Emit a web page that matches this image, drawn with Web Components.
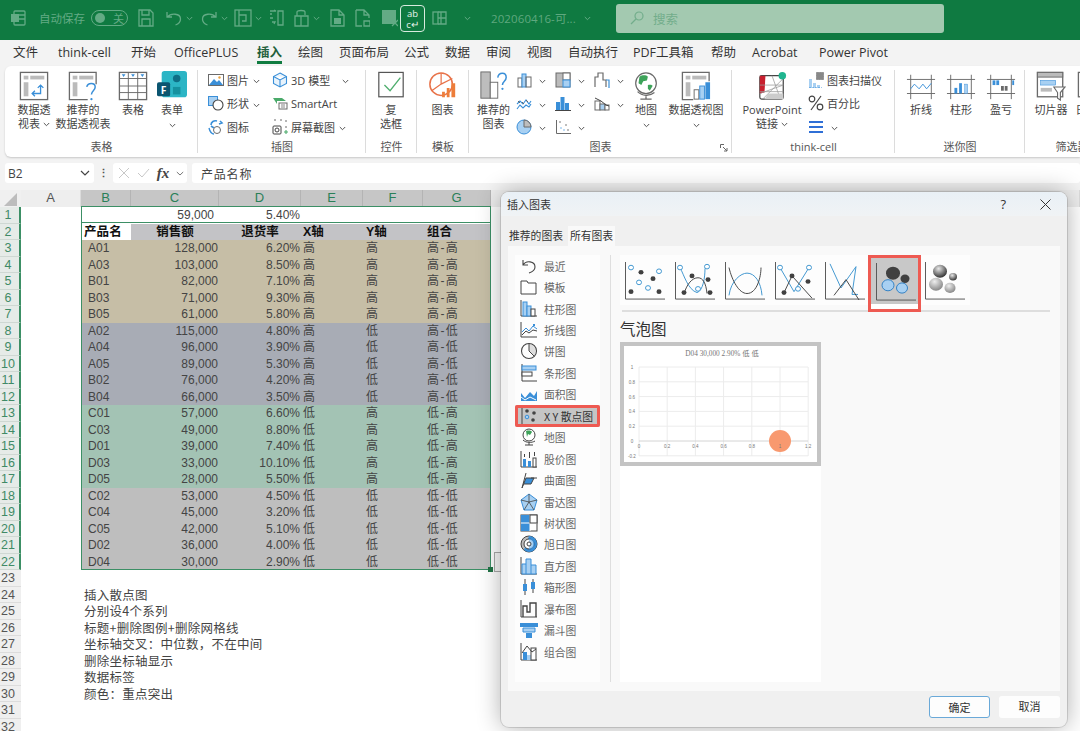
<!DOCTYPE html>
<html lang="zh">
<head>
<meta charset="utf-8">
<style>
html,body{margin:0;padding:0;width:1080px;height:731px;overflow:hidden;background:#f3f3f3}
body{font-family:"Open Sans","Noto Sans CJK SC",sans-serif;position:relative;display:flex;flex-direction:column}
</style>
</head>
<body>
<xl-titlebar></xl-titlebar>
<xl-tabs></xl-tabs>
<xl-ribbon>
  <xl-group label="表格" w="193" pad="5">
    <xl-big icon="pivot" w="48" chev="inline">数据透<br>视表</xl-big>
    <xl-big icon="recpivot" w="50">推荐的<br>数据透视表</xl-big>
    <xl-big icon="table" w="50">表格</xl-big>
    <xl-big icon="forms" w="28" chev="below">表单</xl-big>
  </xl-group>
  <xl-group label="插图" w="168" pad="10">
    <xl-col w="64">
      <xl-small icon="picture" chev="1">图片</xl-small>
      <xl-small icon="shape" chev="1">形状</xl-small>
      <xl-small icon="iconset">图标</xl-small>
    </xl-col>
    <xl-col w="88">
      <xl-small icon="cube" chev="far">3D 模型</xl-small>
      <xl-small icon="smartart">SmartArt</xl-small>
      <xl-small icon="screenshot" chev="1">屏幕截图</xl-small>
    </xl-col>
  </xl-group>
  <xl-group label="控件" w="51" pad="0">
    <xl-big icon="checkbox" w="50">复<br>选框</xl-big>
  </xl-group>
  <xl-group label="模板" w="52" pad="0">
    <xl-big icon="template" w="51">图表</xl-big>
  </xl-group>
  <xl-group label="图表" w="263" pad="2" launcher="1">
    <xl-big icon="recchart" w="45">推荐的<br>图表</xl-big>
    <xl-col w="39"><xl-small icon="bar" chev="1"></xl-small><xl-small icon="line" chev="1"></xl-small><xl-small icon="pie" chev="1"></xl-small></xl-col>
    <xl-col w="39"><xl-small icon="tree" chev="1"></xl-small><xl-small icon="stat" chev="1"></xl-small><xl-small icon="scatter" chev="1"></xl-small></xl-col>
    <xl-col w="34"><xl-small icon="waterfall" chev="1"></xl-small><xl-small icon="combo" chev="1"></xl-small></xl-col>
    <xl-big icon="globe" w="36" chev="below">地图</xl-big>
    <xl-big icon="pivotchart" w="64" chev="below">数据透视图</xl-big>
  </xl-group>
  <xl-group label="think-cell" w="163" pad="9">
    <xl-big icon="ppt" w="62" chev="inline">PowerPoint<br>链接</xl-big>
    <xl-col w="84" style="margin-left:5px">
      <xl-small icon="scan">图表扫描仪</xl-small>
      <xl-small icon="percent">百分比</xl-small>
      <xl-small icon="lines" chev="1"></xl-small>
    </xl-col>
  </xl-group>
  <xl-group label="迷你图" w="130" pad="6">
    <xl-big icon="sline" w="40">折线</xl-big>
    <xl-big icon="sbar" w="40">柱形</xl-big>
    <xl-big icon="swin" w="40">盈亏</xl-big>
  </xl-group>
  <xl-group label="筛选器" w="94" pad="8" nodiv="1">
    <xl-big icon="slicer" w="36">切片器</xl-big>
    <xl-big icon="timeline" w="36" style="margin-left:5px">日程表</xl-big>
  </xl-group>
</xl-ribbon>
<xl-formula-bar></xl-formula-bar>
<xl-sheet></xl-sheet>
<xl-chart-dialog></xl-chart-dialog>

<script>
const G='#6a6a6a',D='#444',B='#3a8fd8',L='#a8d0f2';
const big={
 pivot:`<rect x="1.5" y="1.5" width="29" height="29" fill="#fff" stroke="${G}" stroke-width="1.4"/><rect x="5" y="5" width="5" height="4" fill="#bbb"/><rect x="12" y="5" width="15" height="4" fill="#bbb"/><rect x="5" y="12" width="5" height="15" fill="#bbb"/><path d="M14 24h9v-9M20 18l3-3 3 3M17 21l-3 3 3 3" fill="none" stroke="${B}" stroke-width="1.4"/>`,
 recpivot:`<path d="M30 14V1.5H1.5v29H21" fill="#fff" stroke="${G}" stroke-width="1.4"/><rect x="5" y="5" width="5" height="4" fill="#bbb"/><rect x="12" y="5" width="15" height="4" fill="#bbb"/><rect x="5" y="12" width="5" height="15" fill="#bbb"/><path d="M20 17c1-5 9-5 9 0 0 4-4 4-4 8" fill="none" stroke="${B}" stroke-width="1.6"/><circle cx="25" cy="30" r="1.2" fill="${B}"/>`,
 table:`<rect x="1.5" y="1.5" width="29" height="29" fill="#fff" stroke="${G}" stroke-width="1.4"/><path d="M1.5 8h29M1.5 16h29M1.5 23h29M11 1.5v29M21 1.5v29" stroke="${G}" fill="none"/><path d="M4 3.5h4l-2 3zM14 3.5h4l-2 3zM24 3.5h4l-2 3z" fill="${B}"/>`,
 forms:`<rect x="5" y="0" width="27" height="28" rx="3" fill="#2cb5c5"/><circle cx="21" cy="8" r="4" fill="#0f6f86"/><rect x="17" y="17" width="8" height="8" fill="#15919f"/><rect x="0" y="12" width="14" height="15" rx="2" fill="#0b5570"/><text x="7" y="24" font-size="11" font-weight="700" fill="#fff" text-anchor="middle" font-family="Open Sans">F</text>`,
 checkbox:`<rect x="3" y="1.5" width="26" height="26" fill="#fff" stroke="#555" stroke-width="1.3"/><path d="M9 15l6 6 11-14" fill="none" stroke="#4fae6e" stroke-width="1.4"/>`,
 template:`<circle cx="14" cy="14" r="12" fill="#fff" stroke="#e8734a" stroke-width="1.6"/><path d="M14 2v12M4 21l10-7L26 8" stroke="#e8734a" stroke-width="1.3" fill="none"/><path d="M15 28V22h3v6zM20 28V18h3v10zM25 28V13h4v15z" fill="#ed7d3a"/>`,
 recchart:`<rect x="2" y="1" width="10" height="28" fill="#bdbdbd" stroke="${G}"/><rect x="12" y="12" width="8" height="17" fill="#fff" stroke="${G}"/><path d="M20 7c1-6 9-6 9 0 0 4-4 4-4 8" fill="none" stroke="${B}" stroke-width="1.6"/><circle cx="25" cy="19" r="1.2" fill="${B}"/>`,
 globe:`<circle cx="16" cy="13" r="11" fill="#fff" stroke="${G}" stroke-width="1.3"/><path d="M9 6c3-2 7-2 9 0l-1 4-4 1-2 4-3-2zM18 15c3-1 5 0 5 1l-3 5-2-2z" fill="#3ea35a"/><path d="M7 22c5 5 13 5 18 1M16 27v3M10 30h12" fill="none" stroke="${G}" stroke-width="1.4"/>`,
 pivotchart:`<path d="M30 11V1.5H1.5v29H13" fill="#fff" stroke="${G}" stroke-width="1.4"/><rect x="5" y="5" width="5" height="4" fill="#bbb"/><rect x="12" y="5" width="15" height="4" fill="#bbb"/><rect x="5" y="12" width="5" height="15" fill="#bbb"/><rect x="14" y="20" width="5" height="10" fill="#fff" stroke="${G}"/><rect x="20" y="16" width="5" height="14" fill="${L}" stroke="${B}"/><rect x="26" y="12" width="5" height="18" fill="${B}"/>`,
 ppt:`<rect x="3" y="5" width="25" height="25" rx="2" fill="#fff" stroke="#444" stroke-width="1.3"/><path d="M3 5h6l-1 18-5 1z" fill="#c8202f"/><path d="M3 24l25-9M6 30l22-22M16 5l9 25M3 15h25M3 22h25" stroke="#999" fill="none" stroke-width=".8"/><path d="M8 30l4-6h16v6z" fill="#ccc"/><circle cx="27" cy="5" r="4" fill="#1fb58f"/>`,
 sline:`<path d="M1 9h30M1 24h30M5 4v26M27 4v26" stroke="${G}" fill="none"/><path d="M5 19l4-5 5 5 4-5 4 5 5-6" stroke="${B}" fill="none"/>`,
 sbar:`<path d="M1 9h30M1 24h30M5 4v26M27 4v26" stroke="${G}" fill="none"/><rect x="9" y="18" width="3" height="6" fill="${B}"/><rect x="14" y="13" width="3" height="11" fill="${B}"/><rect x="20" y="14" width="3" height="10" fill="${L}" stroke="${B}" stroke-width=".5"/>`,
 swin:`<path d="M1 9h30M1 24h30M5 4v26M27 4v26" stroke="${G}" fill="none"/><rect x="7" y="10" width="3" height="5" fill="${B}"/><rect x="11" y="10" width="3" height="5" fill="${B}"/><rect x="16" y="16" width="3" height="5" fill="${G}"/><rect x="20" y="16" width="3" height="5" fill="${G}"/><rect x="28" y="10" width="2" height="5" fill="${B}"/>`,
 slicer:`<rect x="1.5" y="1.5" width="27" height="26" fill="#fff" stroke="${G}" stroke-width="1.4"/><rect x="1.5" y="1.5" width="27" height="5" fill="#bbb" stroke="${G}"/><rect x="5" y="10" width="16" height="5" fill="${L}" stroke="${B}" stroke-width=".6"/><rect x="5" y="18" width="12" height="4" fill="#bbb"/><path d="M19 17h12l-5 6v8l-3-2v-6z" fill="#fff" stroke="${G}" stroke-width="1.2"/>`,
 timeline:`<rect x="1.5" y="1.5" width="27" height="26" fill="#fff" stroke="${G}" stroke-width="1.4"/>`
};
const small={
 picture:`<rect x=".5" y="2.5" width="15" height="11" fill="#fff" stroke="${G}"/><path d="M1 13l5-6 3 3 2-2 4 5z" fill="${B}"/><circle cx="11.5" cy="5.5" r="1.2" fill="#e9a33f"/>`,
 shape:`<rect x=".5" y="1.5" width="9" height="9" fill="${L}" stroke="${B}"/><circle cx="10" cy="10" r="5" fill="#fff" stroke="${D}" stroke-width="1.1"/>`,
 iconset:`<path d="M3 6c0-3 3-5 6-4M12 2l2 2-3 1M3 7l3 2" fill="none" stroke="${B}" stroke-width="1.6"/><circle cx="9" cy="11" r="3.5" fill="#fff" stroke="${G}"/><path d="M1 9c1 4 2 6 5 6" fill="none" stroke="${B}" stroke-width="1.4"/>`,
 cube:`<path d="M8 1l6.5 3.5v7L8 15l-6.5-3.5v-7zM1.5 4.5L8 8l6.5-3.5M8 8v7" fill="#e8f3fc" stroke="${B}" stroke-width="1.1"/>`,
 smartart:`<path d="M1 3h9l4 3H5v3z" fill="#4aaa6a"/><rect x="7" y="8" width="8" height="6" fill="#fff" stroke="${G}"/><path d="M9 10h4M9 12h4" stroke="${G}" stroke-width=".8"/>`,
 screenshot:`<path d="M2 1h3M8 1h3M14 1v3M14 7v2" stroke="${G}" stroke-dasharray="2 1" fill="none"/><rect x="1" y="7" width="8" height="8" rx="1" fill="#fff" stroke="${D}"/><circle cx="5" cy="11" r="2" fill="none" stroke="${D}"/><path d="M12 13h4M14 11v4" stroke="#4aaa6a" stroke-width="1.1"/>`,
 bar:`<rect x="2" y="6" width="4" height="9" fill="none" stroke="${G}"/><rect x="6" y="2" width="4" height="13" fill="${L}" stroke="${B}"/><rect x="10" y="5" width="5" height="10" fill="none" stroke="${G}"/>`,
 line:`<path d="M1 9l3-3 3 3 3-4 3 4 2-3M1 14l3-4 3 3 3-3 3 2 2-3" fill="none" stroke="${B}" stroke-width="1.1"/><path d="M2 6l2 2M6 7l2 2M10 5l2 2" stroke="${G}"/>`,
 pie:`<circle cx="8" cy="8" r="7" fill="${L}" stroke="${B}"/><path d="M8 1A7 7 0 0 1 15 8H8z" fill="#bdbdbd" stroke="${G}"/>`,
 tree:`<rect x="1" y="1" width="14" height="14" fill="#bbb" stroke="${G}"/><rect x="8" y="1" width="7" height="7" fill="#fff" stroke="${G}"/><rect x="8" y="8" width="7" height="7" fill="${L}" stroke="${B}"/>`,
 stat:`<rect x="1" y="7" width="4" height="8" fill="${B}"/><rect x="5.5" y="2" width="4" height="13" fill="${B}"/><rect x="10" y="8" width="4" height="7" fill="${B}"/><path d="M0 15.5h16" stroke="${D}"/>`,
 scatter:`<path d="M1.5 1v13.5H16" fill="none" stroke="${G}"/><g fill="${L}"><circle cx="6" cy="9" r="1"/><circle cx="9" cy="11" r="1"/></g><g fill="${G}"><circle cx="5" cy="3" r=".8"/><circle cx="11" cy="6" r=".8"/><circle cx="13" cy="11" r=".8"/></g>`,
 waterfall:`<path d="M1 15V5h3V1h5v7h3v7" fill="none" stroke="${G}" stroke-width="1.2"/><path d="M12 8h3v8" fill="none" stroke="${B}" stroke-width="1.2"/>`,
 combo:`<rect x="1" y="6" width="5" height="9" fill="#fff" stroke="${G}"/><rect x="6" y="9" width="5" height="6" fill="${L}" stroke="${G}"/><rect x="11" y="10" width="4" height="5" fill="#fff" stroke="${G}"/><path d="M1 3l6 3 5 4 3 1" stroke="${D}" fill="none"/>`,
 scan:`<rect x="8" y="0" width="8" height="8" fill="#888" stroke="#fff" stroke-width=".4" stroke-dasharray="1 .6"/><path d="M1 16V7h3v9zM5 16v-5h3v5zM9 16v-3h3v3z" fill="${L}"/><path d="M1 16h13" stroke="${B}" stroke-dasharray="2 1"/>`,
 percent:`<circle cx="4" cy="4" r="2.8" fill="none" stroke="${D}" stroke-width="1.2"/><circle cx="12" cy="12" r="2.8" fill="none" stroke="${D}" stroke-width="1.2"/><path d="M13 1L3 15" stroke="${D}" stroke-width="1.2"/>`,
 lines:`<path d="M1 3h14M1 8h14M1 13h14" stroke="#2f6fd6" stroke-width="2.2"/>`
};
const chevSvg=`<svg width="7" height="5" viewBox="0 0 7 5"><path d="M.8 1l2.7 2.7L6.2 1" fill="none" stroke="#555" stroke-width="1"/></svg>`;

class XlTitlebar extends HTMLElement{
  constructor(){super();this.attachShadow({mode:'open'});}
  connectedCallback(){
    const c='#63ab85';
    const ic=(w,body,ml)=>`<svg width="${w}" height="18" viewBox="0 0 ${w} 18" style="margin-left:${ml}px;flex:none" fill="none" stroke="${c}" stroke-width="1.3">${body}</svg>`;
    const chev=(ml)=>`<svg width="7" height="5" viewBox="0 0 7 5" style="margin-left:${ml}px;flex:none"><path d="M.8 1l2.7 2.7L6.2 1" fill="none" stroke="${c}"/></svg>`;
    this.shadowRoot.innerHTML=`<style>
    :host{display:flex;align-items:center;height:40px;padding-bottom:4px;box-sizing:border-box;background:#0f7a41;color:${c};font-size:11.5px;flex:none;overflow:hidden;font-family:"Noto Sans CJK SC",sans-serif}
    .toggle{width:37px;height:16px;border:1.3px solid ${c};border-radius:9px;margin-left:6px;display:flex;align-items:center;box-sizing:border-box;padding:0 3px;justify-content:space-between;font-size:11px;flex:none}
    .toggle i{width:10px;height:10px;border-radius:50%;background:${c}}
    .abc{width:25px;height:27px;border:1px solid #d8ebdf;border-radius:4px;margin-left:2px;box-sizing:border-box;color:#e8f3ec;font:9.5px/11px "Open Sans",sans-serif;text-align:center;padding-top:2px;flex:none}
    .search{margin-left:25px;width:328px;height:29px;background:#a3c9b0;border-radius:3px;display:flex;align-items:center;color:#72ad8b;font-size:12.5px;flex:none}
    .t{font-family:"Open Sans","Noto Sans CJK SC",sans-serif;letter-spacing:.1px;white-space:nowrap;flex:none;width:81px;margin-left:20px;color:#5fa87f}
    </style>
    ${ic(16,'<rect x="4" y="2" width="11" height="14" rx="1"/><rect x="1" y="5" width="8" height="8" fill="'+c+'" stroke="none"/><path d="M9 6h6M9 10h6"/>',10)}
    <span style="margin-left:13px;flex:none;width:46px;white-space:nowrap">自动保存</span>
    <div class="toggle"><i></i><span>关</span></div>
    ${ic(16,'<path d="M1 1h11l3 3v13H1zM4 1v5h7V1M4 17v-7h8v7"/>',10)}
    ${ic(18,'<path d="M2 3v5h5M2.5 8c3-4 13-4 13 2 0 3-2 5-5 6"/>',11)}
    ${chev(3)}
    ${ic(18,'<path d="M16 3v5h-5M15.5 8c-3-4-13-4-13 2 0 3 2 5 5 6"/>',7)}
    ${chev(3)}
    ${ic(18,'<rect x="1" y="1" width="16" height="16"/><path d="M5 1v16M5 6h7v6H8"/>',6)}
    ${chev(3)}
    ${ic(15,'<path d="M1 2h6l-2-1M3 5H1M1 9h3M3 13h3l-1 2M9 2h5v14H9z"/>',7)}
    ${ic(17,'<path d="M4 7V3c0-2 8-2 8 0v3M2 7h13v10H2zM8 7v10"/>',9)}
    ${chev(3)}
    ${ic(15,'<path d="M1 1h8l5 5v11H1zM9 1v5h5"/><rect x="4" y="9" width="7" height="6" fill="'+c+'" stroke="none"/>',10)}
    ${ic(15,'<path d="M1 1h8l5 5v3M1 1v16h6M9 1v5h5M9 12h6v5H9z"/>',10)}
    ${ic(17,'<rect x="1" y="1" width="14" height="14" fill="'+c+'" stroke="none"/><path d="M4 12h9M11 11l6 6M17 11l-6 6"/>',11)}
    <div class="abc">ab<br>c&#8629;</div>
    ${ic(15,'<rect x="1" y="3" width="5" height="12"/><path d="M6 3h8v12H6M9 3v12M6 9h8"/>',7)}
    ${chev(17)}
    <span class="t">202060416-可...</span>
    ${chev(12)}
    <div class="search"><svg width="14" height="14" viewBox="0 0 14 14" style="margin:0 9px 0 14px" fill="none" stroke="#72ad8b" stroke-width="1.2"><circle cx="9" cy="5" r="4"/><path d="M6 8l-5 5"/></svg>搜索</div>`;
  }
}
class XlTabs extends HTMLElement{
  constructor(){super();this.attachShadow({mode:'open'});}
  connectedCallback(){
    // 每个标签的起点，宽度由相邻起点算出
    const tabs=[['文件',13],['think-cell',58],['开始',131],['OfficePLUS',174],['插入',257],['绘图',298],['页面布局',339],['公式',404],['数据',445],['审阅',486],['视图',527],['自动执行',568],['PDF工具箱',633],['帮助',711],['Acrobat',752],['Power Pivot',819],['',900]];
    const h=tabs.slice(0,-1).map(([t,x],i)=>`<div style="width:${tabs[i+1][1]-x}px"><span class="${t==='插入'?'on':''}">${t}</span></div>`).join('');
    this.shadowRoot.innerHTML=`<style>
    :host{display:flex;align-items:flex-start;height:26px;background:#f3f3f3;padding-left:13px;box-sizing:border-box;font-size:12.5px;color:#333;flex:none;white-space:nowrap;line-height:25px}
    div{flex:none}
    span{position:relative;display:inline-block}
    .on{font-weight:700;color:#1f5f3c}
    .on::after{content:"";position:absolute;left:0;right:0;top:21px;height:2.5px;background:#107c41}
    </style>${h}`;
  }
}
class XlRibbon extends HTMLElement{
  constructor(){super();this.attachShadow({mode:'open'});
    this.shadowRoot.innerHTML=`<style>
    :host{display:flex;flex:none;height:91px;margin-left:5px;background:#fff;border-radius:6px 0 0 6px;box-shadow:0 1px 2px rgba(0,0,0,.18);overflow:hidden}
    </style><slot></slot>`;}
}
class XlGroup extends HTMLElement{
  constructor(){super();this.attachShadow({mode:'open'});}
  connectedCallback(){
    const g=this;
    this.shadowRoot.innerHTML=`<style>
    :host{display:flex;flex-direction:column;flex:none;height:91px;box-sizing:border-box;width:${g.getAttribute('w')}px;position:relative;font-family:"Open Sans","Noto Sans CJK SC",sans-serif}
    .body{display:flex;height:72px;padding-left:${g.getAttribute('pad')}px;padding-top:5px;box-sizing:border-box}
    .lab{height:19px;text-align:center;font-size:11px;line-height:17px;color:#555;white-space:nowrap}
    .div{position:absolute;right:0;top:4px;bottom:4px;width:1px;background:#dcdcdc;${g.hasAttribute('nodiv')?'display:none':''}}
    .launch{position:absolute;right:4px;bottom:5px}
    </style><div class="body"><slot></slot></div><div class="lab">${g.getAttribute('label')}</div><div class="div"></div>
    ${g.hasAttribute('launcher')?`<svg class="launch" width="8" height="8" viewBox="0 0 8 8" fill="none" stroke="#666"><path d="M.5 4V.5H4M3 3l4 4M7 4v3H4"/></svg>`:''}`;
  }
}
class XlBig extends HTMLElement{
  constructor(){super();this.attachShadow({mode:'open'});}
  connectedCallback(){
    const name=this.getAttribute('icon'),ch=this.getAttribute('chev');
    this.shadowRoot.innerHTML=`<style>
    :host{display:flex;flex-direction:column;align-items:center;flex:none;width:${this.getAttribute('w')}px;font-size:11px;line-height:14px;color:#444;text-align:center;white-space:nowrap;font-family:"Open Sans","Noto Sans CJK SC",sans-serif}
    svg.i{margin-bottom:2px;flex:none}
    .below{margin-top:4px;line-height:6px}
    .inl{margin-left:3px;vertical-align:1px}
    </style><svg class="i" width="30" height="30" viewBox="0 0 32 32">${big[name]||''}</svg><div><slot></slot>${ch==='inline'?`<svg class="inl" width="7" height="5" viewBox="0 0 7 5"><path d="M.8 1l2.7 2.7L6.2 1" fill="none" stroke="#555"/></svg>`:''}</div>${ch==='below'?`<div class="below">${chevSvg}</div>`:''}`;
  }
}
class XlCol extends HTMLElement{
  constructor(){super();this.attachShadow({mode:'open'});}
  connectedCallback(){
    this.shadowRoot.innerHTML=`<style>:host{display:block;flex:none;width:${this.getAttribute('w')}px;margin-top:-3px}</style><slot></slot>`;
  }
}
class XlSmall extends HTMLElement{
  constructor(){super();this.attachShadow({mode:'open'});}
  connectedCallback(){
    const ch=this.getAttribute('chev');
    this.shadowRoot.innerHTML=`<style>
    :host{display:flex;align-items:center;height:23.5px;font-size:11px;color:#444;white-space:nowrap}
    svg.i{flex:none;margin-right:3px}
    .ch{margin-left:4px;flex:none}
    .far{margin-left:12px;flex:none}
    </style><svg class="i" width="16" height="16" viewBox="0 0 16 16">${small[this.getAttribute('icon')]||''}</svg><slot></slot>${ch?`<span class="${ch==='far'?'far':'ch'}">${chevSvg}</span>`:''}`;
  }
}
class XlFormulaBar extends HTMLElement{
  constructor(){super();this.attachShadow({mode:'open'});}
  connectedCallback(){
    this.shadowRoot.innerHTML=`<style>
    :host{display:flex;align-items:center;height:22px;margin-top:5px;padding-left:5px;flex:none;font-size:12px;color:#444;font-family:"Open Sans","Noto Sans CJK SC",sans-serif}
    .box{background:#fff;border-radius:3px;height:20px;display:flex;align-items:center;box-sizing:border-box}
    .name{width:89px;padding:0 4px 0 3px;justify-content:space-between}
    .dots{width:19px;text-align:center;color:#555;font-weight:700;line-height:20px;font-size:11px}
    .fx{width:74px;padding:0 3px 0 5px;justify-content:space-between}
    .fx em{font:italic 700 15px "Liberation Serif",serif;color:#444}
    .f{flex:1;margin-left:5px;padding-left:9px;letter-spacing:.8px;font-family:"Noto Sans CJK SC",sans-serif}
    </style>
    <div class="box name"><span>B2</span><svg width="10" height="6" viewBox="0 0 10 6"><path d="M1 1l4 4 4-4" fill="none" stroke="#444" stroke-width="1.2"/></svg></div>
    <div class="dots">⋮</div>
    <div class="box fx"><svg width="12" height="12" viewBox="0 0 12 12"><path d="M1 1l10 10M11 1L1 11" stroke="#c8c8c8"/></svg><svg width="13" height="12" viewBox="0 0 13 12"><path d="M1 6l4 4 7-8" stroke="#c8c8c8" fill="none"/></svg><em>fx</em><svg width="8" height="5" viewBox="0 0 8 5"><path d="M.8 1l3.2 3 3.2-3" fill="none" stroke="#777"/></svg></div>
    <div class="box f">产品名称</div>`;
  }
}
class XlSheet extends HTMLElement{
  constructor(){super();this.attachShadow({mode:'open'});}
  connectedCallback(){
    const cols=['A','B','C','D','E','F','G'];
    const data=[
     ['t','A01','128,000','6.20%','高','高','高-高'],['t','A03','103,000','8.50%','高','高','高-高'],['t','B01','82,000','7.10%','高','高','高-高'],['t','B03','71,000','9.30%','高','高','高-高'],['t','B05','61,000','5.80%','高','高','高-高'],
     ['b','A02','115,000','4.80%','高','低','高-低'],['b','A04','96,000','3.90%','高','低','高-低'],['b','A05','89,000','5.30%','高','低','高-低'],['b','B02','76,000','4.20%','高','低','高-低'],['b','B04','66,000','3.50%','高','低','高-低'],
     ['m','C01','57,000','6.60%','低','高','低-高'],['m','C03','49,000','8.80%','低','高','低-高'],['m','D01','39,000','7.40%','低','高','低-高'],['m','D03','33,000','10.10%','低','高','低-高'],['m','D05','28,000','5.50%','低','高','低-高'],
     ['k','C02','53,000','4.50%','低','低','低-低'],['k','C04','45,000','3.20%','低','低','低-低'],['k','C05','42,000','5.10%','低','低','低-低'],['k','D02','36,000','4.00%','低','低','低-低'],['k','D04','30,000','2.90%','低','低','低-低']
    ];
    const notes=['插入散点图','分别设4个系列','标题+删除图例+删除网格线','坐标轴交叉：中位数，不在中间','删除坐标轴显示','数据标签','颜色：重点突出'];
    let h=`<div class="corner"><svg width="14" height="13" viewBox="0 0 14 13"><path d="M13 0v13H0z" fill="#bdbdbd"/></svg></div>`;
    h+=cols.map(c=>`<div class="ch ${c==='A'?'':'sel'}">${c}</div>`).join('')+`<div class="ch"></div>`;
    const rn=(n)=>`<div class="rh ${n<=22?'sel':''}">${n}</div>`;
    h+=rn(1)+`<div class="c"></div><div class="c"></div><div class="c n" style="padding-right:5px">59,000</div><div class="c n">5.40%</div><div class="c"></div><div class="c"></div><div class="c"></div><div class="c"></div>`;
    h+=rn(2)+`<div class="c"></div><div class="c act">产品名</div><div class="c h ctr">销售额</div><div class="c h ctr">退货率</div><div class="c h e">X轴</div><div class="c h f">Y轴</div><div class="c h cg">组合</div><div class="c"></div>`;
    data.forEach((d,i)=>{
      const k=d[0];
      h+=rn(i+3)+`<div class="c"></div><div class="c ${k}" style="padding-left:7px">${d[1]}</div><div class="c ${k} n">${d[2]}</div><div class="c ${k} n">${d[3]}</div><div class="c ${k} e">${d[4]}</div><div class="c ${k} f">${d[5]}</div><div class="c ${k} cg sp">${d[6]}</div><div class="c"></div>`;
    });
    for(let r=23;r<=32;r++){
      h+=rn(r)+`<div class="c"></div><div class="c note">${notes[r-24]||''}</div>`+`<div class="c"></div>`.repeat(6);
    }
    this.shadowRoot.innerHTML=`<style>
    :host{display:grid;grid-template-columns:21px 60px 50px 88px 82px 62px 60px 68px 1fr;grid-template-rows:17px;grid-auto-rows:16.5px;background:#fff;margin-top:6px;height:541px;flex:none;font-family:"Liberation Sans","Noto Sans CJK SC",sans-serif;font-size:12px;color:#444;position:relative;overflow:hidden}
    .corner{background:#f0f0f0;display:flex;justify-content:center;align-items:flex-start;padding-top:3px;box-sizing:border-box}
    .ch{background:#eeeeee;text-align:center;line-height:16px;color:#555;border-right:1px solid #dcdcdc;box-sizing:border-box;font-size:13px}
    .ch.sel{background:#c6c6c6;color:#2a8058;border-right-color:#b4b4b4}
    .rh{background:#efefef;text-align:center;line-height:16.5px;color:#555;border-bottom:1px solid #dcdcdc;box-sizing:border-box;padding-right:5px;font-size:12.5px}
    .rh.sel{background:#e6ebe8;color:#3f8a66;border-right:2px solid #3c8f65;padding-right:3px;border-bottom-color:#cfd8d3}
    .c{line-height:16.5px;white-space:nowrap;box-sizing:border-box;padding-left:2px}
    .n{text-align:right;padding-right:1px}
    .t{background:#c6bea6}.b{background:#a8acb5}.m{background:#a3c3b4}.k{background:#bebebe}
    .e{padding-left:2px}.f{padding-left:3px}.cg{padding-left:4px}
    .sp{letter-spacing:1.4px}
    .act{background:#fff;color:#111;font-weight:700;font-size:12.5px;padding-left:3px;letter-spacing:.1px}
    .h{background:#c3c3c6;color:#111;font-weight:700;font-size:12.5px}
    .ctr{text-align:center;padding-left:0}
    .note{padding-left:3px;font-size:12.5px;letter-spacing:.25px;color:#444;font-family:"Noto Sans CJK SC",sans-serif}
    .sel1{position:absolute;left:81px;top:16px;width:410px;height:17px;border:1.5px solid #3c8f65;box-sizing:border-box}
    .sel2{position:absolute;left:81px;top:32px;width:410px;height:348px;border:1.5px solid #3c8f65;box-sizing:border-box}
    .hnd{position:absolute;left:488px;top:377px;width:5px;height:5px;background:#217346}
    .qa{position:absolute;left:494px;top:362px;width:10px;height:20px;border:1px solid #aaa;background:#f7f7f7;box-sizing:border-box}
    </style>${h}
    <div class="sel1"></div><div class="sel2"></div><div class="hnd"></div><div class="qa"></div>`;
  }
}
const listIcons=[
 ['最近',`<path d="M3 3v5h5M3 8c3-5 12-4 12 2 0 3-3 5-6 6" fill="none" stroke="${D}" stroke-width="1.1"/>`],
 ['模板',`<path d="M1 3h6l1 2h8v11H1z" fill="#fff" stroke="${D}"/>`],
 ['柱形图',`<path d="M1 0v16h16" fill="none" stroke="${D}"/><rect x="3" y="2" width="4" height="14" fill="${L}" stroke="${B}"/><rect x="7" y="6" width="4" height="10" fill="${L}" stroke="${B}"/><rect x="11" y="9" width="4" height="7" fill="#fff" stroke="${D}"/>`],
 ['折线图',`<path d="M1 1v15h16" fill="none" stroke="${D}"/><path d="M2 11l4-4 3 3 4-5 4 3" fill="none" stroke="${B}"/><path d="M2 14l4-4 3 2 4-3 4 1" fill="none" stroke="${D}"/><path d="M13 3l2 2M15 3l-2 2" stroke="${B}"/>`],
 ['饼图',`<path d="M9 2v7l5 5c3-4 2-11-5-12z" fill="#ddd"/><circle cx="9" cy="9" r="7.5" fill="none" stroke="${D}" stroke-width="1.1"/><path d="M9 1.5V9l5 5" fill="none" stroke="${D}"/>`],
 ['条形图',`<path d="M2 0v17h15" fill="none" stroke="${D}"/><rect x="2" y="2" width="14" height="4" fill="${L}" stroke="${B}"/><rect x="2" y="8" width="10" height="4" fill="#fff" stroke="${D}"/>`],
 ['面积图',`<path d="M1 8l4 5 5-6 4 4 3-5v10H1z" fill="${B}"/><path d="M1 12l4 3 5-3 6 3" fill="none" stroke="#fff"/>`],
 ['X Y 散点图',`<path d="M2 0v17" stroke="${D}"/><g fill="${D}"><circle cx="7" cy="4" r="1.8"/><circle cx="14" cy="6" r="1.8"/><circle cx="13" cy="13" r="1.8"/></g><circle cx="7" cy="10" r="1.8" fill="${L}" stroke="${B}"/>`],
 ['地图',`<circle cx="9" cy="7" r="6" fill="#fff" stroke="${D}"/><path d="M6 3c3-1 6 0 6 1l-2 3-2-1-1 3z" fill="#3ea35a"/><path d="M3 12c3 3 9 3 12 1M9 15v2M5 17h8" fill="none" stroke="${D}"/>`],
 ['股价图',`<path d="M1 1v16h16" fill="none" stroke="${D}"/><rect x="3" y="9" width="3" height="8" fill="${B}"/><rect x="8" y="11" width="3" height="6" fill="${B}"/><rect x="13" y="8" width="3" height="9" fill="#fff" stroke="${D}"/><path d="M4.5 4v3M9.5 2v6M14.5 2v4" stroke="${D}"/>`],
 ['曲面图',`<path d="M2 17L6 7h8l-3 6H4" fill="${B}" stroke="${D}"/><path d="M6 2L2 17M11 7l6 0" stroke="${D}" fill="none"/>`],
 ['雷达图',`<path d="M9 1l8 6-3 10H4L1 7z" fill="${L}" stroke="${B}"/><path d="M9 1v8M1 7l8 2 8-2M4 17l5-8 5 8" fill="none" stroke="${D}" stroke-width=".8"/>`],
 ['树状图',`<rect x="1" y="1" width="16" height="16" fill="#fff" stroke="${D}"/><rect x="1" y="1" width="9" height="16" fill="${B}"/><path d="M1 9h16M10 1v16" stroke="#fff"/><rect x="10" y="1" width="7" height="8" fill="#fff" stroke="${D}"/>`],
 ['旭日图',`<circle cx="9" cy="9" r="8" fill="#bbb" stroke="${D}"/><path d="M9 1a8 8 0 0 1 0 16A8 8 0 0 1 4 15" fill="${B}"/><circle cx="9" cy="9" r="5" fill="#fff" stroke="${D}"/><path d="M9 4a5 5 0 0 1 0 10" fill="${L}" stroke="${B}"/><circle cx="9" cy="9" r="2" fill="#fff" stroke="${D}"/>`],
 ['直方图',`<path d="M1 0v17h16" fill="none" stroke="${D}"/><path d="M2 17V7h4V2h5v6h5v9z" fill="${L}" stroke="${B}"/><path d="M6 7v10M11 8v9" stroke="${B}"/>`],
 ['箱形图',`<path d="M5 1v16M13 1v14" stroke="${D}"/><rect x="3" y="6" width="4" height="7" fill="${B}"/><rect x="11" y="4" width="4" height="7" fill="${B}"/>`],
 ['瀑布图',`<path d="M1 0v17h16" fill="none" stroke="${D}"/><path d="M3 17V6h4v6h3V3h6v14" fill="none" stroke="${D}" stroke-width="1.4"/>`],
 ['漏斗图',`<path d="M0 2h18v4H0z" fill="${B}"/><path d="M3 7h12v4H3z" fill="${L}" stroke="${B}"/><path d="M6 12h6v5H6z" fill="${B}"/>`],
 ['组合图',`<path d="M1 0v17h16" fill="none" stroke="${D}"/><rect x="3" y="9" width="4" height="8" fill="${B}"/><rect x="7" y="12" width="4" height="5" fill="${L}"/><rect x="11" y="5" width="5" height="12" fill="#fff" stroke="${D}"/><path d="M2 10l5-7 5 6 4-3" fill="none" stroke="${D}"/>`]
];
const ax=`<path d="M.5 0v40H40" fill="none" stroke="#555"/>`;
const dot=(x,y,o)=>o?`<circle cx="${x}" cy="${y}" r="2.5" fill="#fff" stroke="#3d95cf"/>`:`<circle cx="${x}" cy="${y}" r="2.5" fill="#404040"/>`;
const strip=[
 ax+dot(6,6,1)+dot(16,11)+dot(34,10,1)+dot(28,18)+dot(14,22,1)+dot(6,32)+dot(23,28,1)+dot(34,32),
 ax+`<path d="M5 6c4 8 8 24 17 27 6-2 8-16 8-26" fill="none" stroke="#3d95cf"/><path d="M9 34c3-10 8-17 14-17 5 0 8 6 9 17" fill="none" stroke="#444"/>`+dot(5,6,1)+dot(32,5,1)+dot(17,15)+dot(33,19)+dot(23,29,1)+dot(9,33)+dot(35,33),
 ax+`<path d="M4 36c2-16 12-24 18-24 8 0 14 10 15 24" fill="none" stroke="#3d95cf"/><path d="M4 6c3 14 10 28 18 28 10 0 14-18 14-28" fill="none" stroke="#444"/>`,
 ax+`<path d="M5 6l14 26 15-26" fill="none" stroke="#3d95cf"/><path d="M9 33l8-18 20 24" fill="none" stroke="#444"/>`+dot(5,6,1)+dot(34,6,1)+dot(17,15)+dot(33,21)+dot(23,29,1)+dot(9,33),
 ax+`<path d="M5 2l11 26 15-23-4 30 6 0" fill="none" stroke="#3d95cf"/><path d="M9 36l12-17 13 22" fill="none" stroke="#444"/>`,
];
class XlChartThumb extends HTMLElement{
  constructor(){super();this.attachShadow({mode:'open'});}
  connectedCallback(){
    let g='';
    for(let i=0;i<=6;i++){const x=15+28.2*i;g+=`<path d="M${x} 21V110" stroke="#ececec"/><text x="${x}" y="102" text-anchor="middle" class="a">${[0,.2,.4,.6,.8,1,1.2][i]}</text>`;}
    for(let i=0;i<=6;i++){const y=21+14.8*i;g+=`<path d="M15 ${y}H184" stroke="${i===5?'#d4d4d4':'#ececec'}"/><text x="8" y="${y+2}" text-anchor="middle" class="a">${[1,.8,.6,.4,.2,0,-.2][i]}</text>`;}
    this.shadowRoot.innerHTML=`<style>
    :host{display:block;width:201px;height:124px;box-sizing:border-box;border:4px solid #c4c4c4;background:#fff;flex:none}
    svg{display:block}
    .a{font:4.5px "Liberation Sans",sans-serif;fill:#777}
    .t{font:7.3px "Liberation Serif","Noto Sans CJK SC",serif;fill:#777}
    </style>
    <svg width="193" height="116" viewBox="0 0 193 116">
    <text x="98" y="10" text-anchor="middle" class="t">D04 30,000  2.90% 低 低</text>
    ${g}
    <circle cx="156" cy="95" r="11" fill="#f8996f"/><text x="156" y="102" text-anchor="middle" class="a">1</text>
    </svg>`;
  }
}
class XlChartDialog extends HTMLElement{
  constructor(){super();this.attachShadow({mode:'open'});}
  connectedCallback(){
    const list=listIcons.map(([t,i])=>`<div class="li ${t.startsWith('X')?'cur':''}"><svg width="18" height="18" viewBox="0 0 18 18">${i}</svg><span>${t}</span></div>`).join('');
    const st=strip.map(s=>`<svg class="ty" width="40" height="38" viewBox="0 0 40 41" preserveAspectRatio="none">${s}</svg>`).join('');
    this.shadowRoot.innerHTML=`<style>
    :host{position:absolute;left:501px;top:192px;width:566px;height:535px;background:#f0f0f0;border-radius:8px;box-shadow:0 0 24px rgba(0,0,0,.32),0 0 0 1px rgba(0,0,0,.12);display:flex;flex-direction:column;font-family:"Noto Sans CJK SC",sans-serif;font-size:10.8px;color:#444;overflow:hidden}
    .head{height:24px;display:flex;align-items:center;background:linear-gradient(#e9f0f6,#f0f3f5);padding:0 16px 0 6px;color:#333;flex:none}
    .head b{font-weight:400;flex:1;font-size:11px}
    .q{margin-right:34px;font:13px "Open Sans",sans-serif;color:#333}
    .tabs{display:flex;height:20px;margin:10px 0 0 6px;align-items:flex-start;color:#333;flex:none}
    .tabs span{padding:0 2px;line-height:18px}
    .tabs .on{background:#f9f9f9;margin-left:3px;height:20px}
    .panel{margin:0 7px;height:445px;background:#f9f9f9;display:flex;padding:9px 0 9px 7px;box-sizing:border-box;flex:none}
    .list{width:85px;background:#fdfdfd;box-sizing:border-box;flex:none}
    .li{height:21.44px;display:flex;align-items:center;padding-left:5px;color:#666;box-sizing:border-box;white-space:nowrap}
    .li svg{flex:none;margin-right:6px}
    .li.cur{background:#c5c5c5;color:#333;outline:3px solid #ee5a52;outline-offset:-3px;border-radius:2px}
    .sep{width:1px;background:#dedede;margin:0 9px 0 10px;flex:none}
    .main{flex:1;display:flex;flex-direction:column;min-width:0}
    .stripbox{position:relative;display:flex;align-items:flex-start;height:50px;width:350px;background:#fdfdfd;padding:7px 0 0 5px;box-sizing:border-box;flex:none}
    .ty{flex:none;margin-right:10px}
    .pick{width:53px;height:57px;box-sizing:border-box;border:3px solid #ee5a52;background:linear-gradient(#c8c8c8 0 46px,#fff 46px);margin:-7px 4px 0 -7px;padding:5px 0 0 5px;flex:none;position:relative;z-index:1}
    .rule{height:2px;background:#dedede;margin:5px 0 0 2px;width:428px;flex:none}
    .h{font-size:15.5px;color:#333;margin:5px 0 3px 0;line-height:22px;flex:none}
    .prev{background:#fff;width:201px;flex:1;min-height:0}
    .foot{display:flex;justify-content:flex-end;gap:9px;padding:5px 7px 0 0;flex:none;font-size:11px}
    .btn{width:61px;height:22px;background:#fdfdfd;text-align:center;line-height:21px;border-radius:3px;color:#333;box-sizing:border-box}
    .btn.ok{border:1px solid #6aa9d8}
    </style>
    <div class="head"><b>插入图表</b><span class="q">?</span><svg width="11" height="11" viewBox="0 0 11 11"><path d="M.5.5l10 10M10.5.5l-10 10" stroke="#333" stroke-width="1"/></svg></div>
    <div class="tabs"><span>推荐的图表</span><span class="on">所有图表</span></div>
    <div class="panel">
      <div class="list">${list}</div>
      <div class="sep"></div>
      <div class="main">
        <div class="stripbox">${st}
          <div class="pick"><svg width="40" height="38" viewBox="0 0 40 41" preserveAspectRatio="none">${ax}<circle cx="17" cy="11" r="7" fill="#404040"/><circle cx="29" cy="17" r="4.5" fill="#404040"/><circle cx="12" cy="24" r="6" fill="${L}" stroke="#2f7fc4"/><circle cx="26" cy="27" r="5.5" fill="${L}" stroke="#2f7fc4"/></svg></div>
          <svg class="ty" width="40" height="38" viewBox="0 0 40 41" preserveAspectRatio="none" style="margin:0">
            <defs><radialGradient id="ba" cx=".4" cy=".3" r=".7"><stop offset="0" stop-color="#e8e8e8"/><stop offset="1" stop-color="#333"/></radialGradient><radialGradient id="bb" cx=".4" cy=".3" r=".7"><stop offset="0" stop-color="#eee"/><stop offset="1" stop-color="#888"/></radialGradient></defs>
            ${ax}<circle cx="15" cy="10" r="7" fill="url(#ba)"/><circle cx="28" cy="16" r="4" fill="url(#ba)"/><circle cx="11" cy="24" r="7" fill="url(#bb)"/><circle cx="25" cy="28" r="5.5" fill="url(#bb)"/>
          </svg>
        </div>
        <div class="rule"></div>
        <div class="h">气泡图</div>
        <div class="prev"><xl-chart-thumb></xl-chart-thumb></div>
      </div>
    </div>
    <div class="foot"><div class="btn ok">确定</div><div class="btn">取消</div></div>`;
  }
}
customElements.define('xl-titlebar',XlTitlebar);
customElements.define('xl-tabs',XlTabs);
customElements.define('xl-ribbon',XlRibbon);
customElements.define('xl-group',XlGroup);
customElements.define('xl-big',XlBig);
customElements.define('xl-col',XlCol);
customElements.define('xl-small',XlSmall);
customElements.define('xl-formula-bar',XlFormulaBar);
customElements.define('xl-sheet',XlSheet);
customElements.define('xl-chart-thumb',XlChartThumb);
customElements.define('xl-chart-dialog',XlChartDialog);
</script>
</body>
</html>
